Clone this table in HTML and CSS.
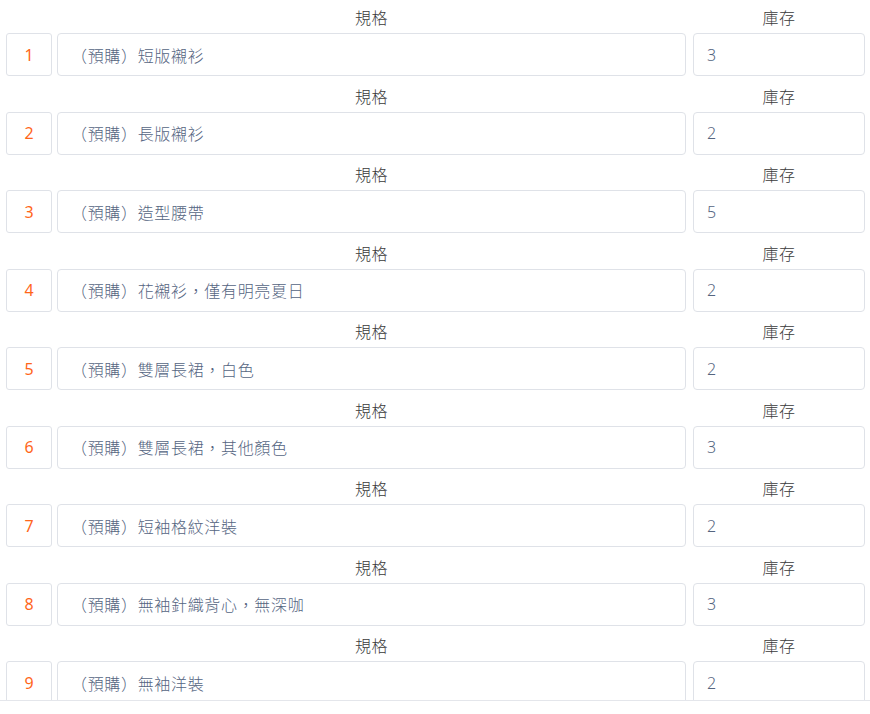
FILE: index.html
```html
<!DOCTYPE html>
<html lang="zh-Hant">

<head>
	<meta charset="UTF-8">
	<meta name="viewport" content="width=device-width, initial-scale=1.0">
	<title>規格庫存</title>
	<link rel="stylesheet" href="styles.css">
</head>

<body>
	<div class="sheet" id="sheet"></div>

	<script>
		const items = [
			{ spec: "（預購）短版襯衫", stock: 3 },
			{ spec: "（預購）長版襯衫", stock: 2 },
			{ spec: "（預購）造型腰帶", stock: 5 },
			{ spec: "（預購）花襯衫，僅有明亮夏日", stock: 2 },
			{ spec: "（預購）雙層長裙，白色", stock: 2 },
			{ spec: "（預購）雙層長裙，其他顏色", stock: 3 },
			{ spec: "（預購）短袖格紋洋裝", stock: 2 },
			{ spec: "（預購）無袖針織背心，無深咖", stock: 3 },
			{ spec: "（預購）無袖洋裝", stock: 2 },
		];

		const sheet = document.getElementById("sheet");
		items.forEach((item, i) => {
			sheet.innerHTML += `
				<div class="row">
					<div class="col col-no">
						<label>&nbsp;</label>
						<div class="box no">${i + 1}</div>
					</div>
					<div class="col col-spec">
						<label>規格</label>
						<input class="box" type="text" value="${item.spec}">
					</div>
					<div class="col col-stock">
						<label>庫存</label>
						<input class="box" type="text" value="${item.stock}">
					</div>
				</div>
			`;
		});
	</script>
</body>

</html>
```

FILE: styles.css
```css
body {
	font-family: "Noto Sans", "Noto Sans CJK TC", sans-serif;
	font-weight: 300;
	margin: 0;
	padding: 0;
	background-color: #fff;
	text-spacing-trim: space-all;
}

.sheet {
	height: 694px;
	overflow: hidden;
	border-bottom: 1px solid #e4e6eb;
	padding: 6px 5px 0 6px;
}

.row {
	display: flex;
	padding-bottom: 8.5px;
}

.col {
	display: flex;
	flex-direction: column;
}

.col label {
	display: block;
	height: 24px;
	line-height: 24px;
	margin-bottom: 3px;
	text-align: center;
	font-size: 16px;
	letter-spacing: 0.6px;
	color: #3a3a3a;
}

.col-no {
	width: 46px;
	margin-right: 5px;
}

.col-spec {
	flex: 1;
	margin-right: 7px;
}

.col-stock {
	width: 172px;
}

.box {
	box-sizing: border-box;
	height: 43px;
	border: 1px solid #dfe2e8;
	border-radius: 4px;
	font-family: inherit;
	font-weight: 300;
	font-size: 16px;
	letter-spacing: 0.67px;
	color: #55657f;
	padding: 0 13px;
	outline: none;
	background: #fff;
	width: 100%;
	text-spacing-trim: space-all;
}

.no {
	display: flex;
	align-items: center;
	justify-content: center;
	padding: 0;
	letter-spacing: 0;
	font-weight: 400;
	color: #ff661a;
	border-radius: 3px;
}
```
